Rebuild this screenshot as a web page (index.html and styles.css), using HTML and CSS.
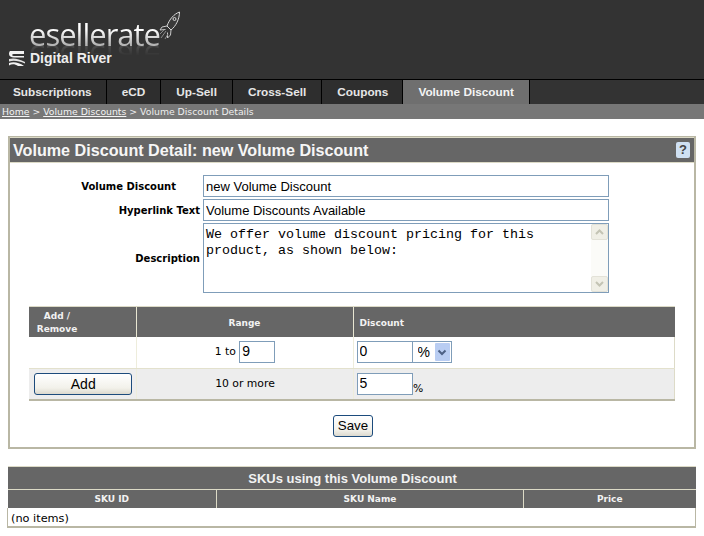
FILE: index.html
```html
<!DOCTYPE html>
<html lang="en">
<head>
    <meta charset="utf-8">
    <title>Volume Discount Detail</title>
    <link rel="stylesheet" href="styles.css">
</head>
<body>
    <div class="header">
        <div class="logo">
            <div class="logo-top">
                <span class="logo-word">esellerate</span>
                <svg class="rocket" width="22" height="34" viewBox="0 0 22 34">
                    <path d="M20.500 1 C15 3 10.500 8 8 15 L12 19 C17 15 20.500 8 20.500 1 Z" fill="#3a3a3a" stroke="#d8d8d8" stroke-width="1"/>
                    <path d="M8 15 L3 16 L1 19 L6.500 18.500 M12 19 L11.500 24 L8.500 27 L8.500 21.500" fill="none" stroke="#c8c8c8" stroke-width="1"/>
                    <path d="M7 20 L2 27 M5 19 L1 23 M9 23 L6 28" fill="none" stroke="#8a8a8a" stroke-width="1"/>
                    <circle cx="15.500" cy="8" r="1.500" fill="none" stroke="#d8d8d8"/>
                </svg>
            </div>
            <div class="logo-bottom">
                <svg class="river" width="16" height="15" viewBox="0 0 16 15">
                    <path d="M1 0 H15 V3 H6 C4 3 3 3.500 3 4 C3 4.500 4 5 6 5 H15 V6.500 H5 C2 6.500 0 5 0 3 C0 1.500 0.500 0.500 1 0 Z" fill="#f2f2f2"/>
                    <path d="M0 8 C5 6.500 10 8 16 11 V12.500 C10 10 5 9 0 10.500 Z" fill="#e2e2e2"/>
                    <path d="M0 12 C5 10.500 10 11.500 15 15 H9 C6 13 3 12.500 0 14.500 Z" fill="#f2f2f2"/>
                </svg>
                <span class="river-word">Digital River</span>
            </div>
        </div>
    </div>

    <ul class="tabs">
        <li class="tab tab-first">Subscriptions</li>
        <li class="tab">eCD</li>
        <li class="tab">Up-Sell</li>
        <li class="tab">Cross-Sell</li>
        <li class="tab tab-coupons">Coupons</li>
        <li class="tab tab-active">Volume Discount</li>
    </ul>

    <div class="crumbs">
        <a href="#">Home</a> &gt; <a href="#">Volume Discounts</a> &gt; Volume Discount Details
    </div>

    <div class="panel">
        <div class="panel-title">
            <h1>Volume Discount Detail: new Volume Discount</h1>
            <span class="help">?</span>
        </div>

        <div class="fields">
            <label class="field-label label-first">Volume Discount</label>
            <input class="field-input" type="text" value="new Volume Discount">
            <label class="field-label">Hyperlink Text</label>
            <input class="field-input" type="text" value="Volume Discounts Available">
            <label class="field-label">Description</label>
            <div class="desc">
                <textarea spellcheck="false">We offer volume discount pricing for this product, as shown below:</textarea>
                <div class="scrollbar">
                    <span class="scroll-btn">
                        <svg width="9" height="6" viewBox="0 0 9 6"><path d="M1 5 L4.500 1.500 L8 5" fill="none" stroke="#c4c4b4" stroke-width="2"/></svg>
                    </span>
                    <span class="scroll-btn">
                        <svg width="9" height="6" viewBox="0 0 9 6"><path d="M1 1 L4.500 4.500 L8 1" fill="none" stroke="#c4c4b4" stroke-width="2"/></svg>
                    </span>
                </div>
            </div>
        </div>

        <table class="ranges">
            <tr class="ranges-head">
                <th class="col-add"><span class="add-head">Add /<br>Remove</span></th>
                <th class="col-range">Range</th>
                <th class="col-discount">Discount</th>
            </tr>
            <tr>
                <td></td>
                <td class="cell-range">1 to <input class="small-input" type="text" value="9"></td>
                <td class="cell-discount">
                    <input class="small-input percent-input" type="text" value="0"><span class="select-box"><select><option>%</option></select><span class="select-arrow"><svg width="10" height="7" viewBox="0 0 10 7"><path d="M1.500 1.500 L5 5 L8.500 1.500" fill="none" stroke="#4d6185" stroke-width="2"/></svg></span></span>
                </td>
            </tr>
            <tr class="row-alt">
                <td class="cell-add"><button class="btn btn-add" type="button">Add</button></td>
                <td class="cell-range">10 or more</td>
                <td class="cell-discount"><input class="small-input percent-input" type="text" value="5"> <span class="percent">%</span></td>
            </tr>
        </table>

        <div class="save-row">
            <button class="btn btn-save" type="button">Save</button>
        </div>
    </div>

    <table class="skus">
        <colgroup>
            <col class="sku-id">
            <col class="sku-name">
            <col>
        </colgroup>
        <tr class="skus-title">
            <th colspan="3">SKUs using this Volume Discount</th>
        </tr>
        <tr class="skus-head">
            <th>SKU ID</th>
            <th>SKU Name</th>
            <th>Price</th>
        </tr>
        <tr>
            <td class="no-items" colspan="3">(no items)</td>
        </tr>
    </table>
</body>
</html>
```

FILE: styles.css
```css
body {
    margin: 0;
    background-color: white;
    color: black;
    font-family: "DejaVu Sans", sans-serif;
    font-size: 10px;
}

/* header */
.header {
    height: 79px;
    background-color: #333;
    box-sizing: border-box;
    padding: 11px 0 0 9px;
}

.logo-top {
    display: flex;
    align-items: flex-start;
    height: 37px;
    padding-left: 20px;
}

.logo-word {
    font-family: "Open Sans", sans-serif;
    font-size: 31px;
    line-height: 30px;
    letter-spacing: -1px;
    margin-top: 8px;
    color: transparent;
    background: linear-gradient(#ffffff 35%, #b4b4b4 85%);
    -webkit-background-clip: text;
    background-clip: text;
    -webkit-box-reflect: below -7px linear-gradient(transparent 55%, rgba(255, 255, 255, 0.25));
}

.rocket {
    margin-left: -1px;
}

.logo-bottom {
    display: flex;
    align-items: center;
    gap: 5px;
    margin-top: 2px;
}

.river-word {
    position: relative;
    font-family: "Liberation Sans", sans-serif;
    font-size: 14px;
    font-weight: bold;
    color: #eee;
}

/* tabs */
.tabs {
    display: flex;
    height: 25px;
    margin: 0;
    padding: 0;
    list-style: none;
    background-color: #333;
    border-top: 1px solid black;
    box-sizing: border-box;
    font-family: "Liberation Sans", sans-serif;
    font-size: 11.800px;
    font-weight: bold;
    color: #e6e6e6;
}

.tab {
    padding: 0 15px;
    line-height: 24px;
    background-color: #2e2e2e;
    border-right: 1px solid black;
}

.tab-first {
    padding: 0 14px 0 13px;
}

.tab-coupons {
    padding: 0 14px 0 15px;
}

.tab-active {
    background-color: #6f6f6f;
    color: #f4f4f4;
}

.crumbs {
    height: 15px;
    background-color: #777;
    color: #eee;
    padding-left: 2px;
    font-size: 9.300px;
    line-height: 15px;
}

.crumbs a {
    color: #f4f4f4;
}

/* main panel */
.panel {
    margin: 17px 8px 0 8px;
    border: 2px solid #b9b7a4;
    border-top-width: 1px;
    height: 313px;
    box-sizing: border-box;
}

.panel-title {
    display: flex;
    align-items: center;
    justify-content: space-between;
    height: 24px;
    background-color: #666;
    border-top: 1px solid #dcdac6;
    border-bottom: 1px solid #dcdac6;
    padding: 0 4px 0 3px;
}

.panel-title h1 {
    margin: 0;
    font-family: "Liberation Sans", sans-serif;
    font-size: 16.150px;
    font-weight: bold;
    color: #f6f6f6;
}

.help {
    width: 14px;
    height: 16px;
    background-color: #cfe0f2;
    border-radius: 2px;
    color: #444;
    text-align: center;
    font-family: "Liberation Sans", sans-serif;
    font-size: 13px;
    font-weight: bold;
    line-height: 16px;
}

.fields {
    display: grid;
    grid-template-columns: 190px 406px;
    grid-template-rows: 22px 22px 70px;
    row-gap: 2px;
    column-gap: 3px;
    padding-top: 12px;
    align-items: center;
}

.field-label {
    text-align: right;
    font-size: 10px;
    font-weight: bold;
}

.label-first {
    padding-right: 24px;
}

.field-input {
    box-sizing: border-box;
    width: 100%;
    height: 22px;
    border: 1px solid #7f9db9;
    padding: 1px 2px;
    font-family: "Liberation Sans", sans-serif;
    font-size: 13px;
    color: black;
}

.desc {
    display: flex;
    height: 70px;
    box-sizing: border-box;
    border: 1px solid #7f9db9;
}

.desc textarea {
    flex: 1;
    border: none;
    outline: none;
    resize: none;
    padding: 3px 2px 0 2px;
    overflow: hidden;
    font-family: "Liberation Mono", monospace;
    font-size: 13.330px;
    line-height: 16px;
    color: black;
}

.scrollbar {
    display: flex;
    flex-direction: column;
    justify-content: space-between;
    width: 17px;
    background-color: #fbfbf8;
}

.scroll-btn {
    display: flex;
    align-items: center;
    justify-content: center;
    height: 16px;
    background-color: #f0efe6;
    border: 1px solid #e3e2d8;
    border-radius: 2px;
    box-sizing: border-box;
}

/* range table */
.ranges {
    width: 646px;
    margin: 13px 0 0 19px;
    border-collapse: collapse;
    border-bottom: 2px solid #b9b7a4;
    table-layout: fixed;
}

.ranges-head th {
    height: 30px;
    padding: 2px 0 0 0;
    box-sizing: border-box;
    background-color: #666;
    color: #f2f2f2;
    font-size: 9px;
    font-weight: bold;
    border-left: 1px solid #e8e6d2;
    border-top: 1px solid #dcdac6;
}

.ranges-head th:first-child {
    border-left: none;
}

.col-add {
    width: 107px;
    text-align: left;
}

.add-head {
    display: block;
    width: 42px;
    margin-left: 7px;
    text-align: center;
    line-height: 12.500px;
}

.col-range {
    width: 217px;
}

.ranges-head .col-discount {
    padding-left: 6px;
    text-align: left;
}

.ranges td {
    height: 31px;
    padding: 0;
    border-left: 1px solid #eeeddc;
    border-bottom: 1px solid #e3e1cd;
    font-size: 10.800px;
}

.ranges td:first-child {
    border-left: none;
}

.ranges td:last-child {
    border-right: 1px solid #dddbc8;
}

.ranges .row-alt td {
    height: 30px;
    background-color: #ededed;
    border-bottom: none;
}

.ranges .cell-add {
    padding-left: 2px;
    text-align: center;
}

.ranges .cell-range {
    padding-left: 1px;
    text-align: center;
}

.ranges .cell-discount {
    padding-left: 3px;
    white-space: nowrap;
}

.small-input {
    box-sizing: border-box;
    width: 36px;
    height: 22px;
    border: 1px solid #7f9db9;
    padding: 0 2px 2px 2px;
    font-family: "Liberation Sans", sans-serif;
    font-size: 14px;
    vertical-align: middle;
    color: black;
}

.percent-input {
    width: 56px;
}

.percent {
    margin-left: -3px;
    vertical-align: -5px;
}

.select-box {
    position: relative;
    display: inline-block;
    vertical-align: middle;
    width: 39px;
    height: 22px;
}

.select-box select {
    appearance: none;
    box-sizing: border-box;
    width: 100%;
    height: 22px;
    border: 1px solid #7f9db9;
    border-left: none;
    border-radius: 0;
    background-color: white;
    padding: 0 0 0 5px;
    font-family: "Liberation Sans", sans-serif;
    font-size: 14px;
    color: black;
}

.select-arrow {
    position: absolute;
    top: 2px;
    right: 2px;
    display: flex;
    align-items: center;
    justify-content: center;
    width: 15px;
    height: 18px;
    background-color: #b9cdf2;
    border-radius: 1px;
}

.btn {
    height: 22px;
    padding: 0;
    border: 1px solid #1c4b7c;
    border-radius: 3px;
    background: linear-gradient(#ffffff, #f2f1ea 70%, #dcd9ce);
    font-family: "Liberation Sans", sans-serif;
    font-size: 14px;
    color: black;
}

.btn-add {
    width: 98px;
}

.btn-save {
    width: 40px;
    font-size: 13.300px;
}

.save-row {
    margin-top: 14px;
    padding-left: 2px;
    text-align: center;
}

/* sku table */
.skus {
    width: 689px;
    margin: 17px 0 0 7px;
    border-collapse: collapse;
    table-layout: fixed;
    border-bottom: 2px solid #b9b7a4;
}

.sku-id {
    width: 209px;
}

.sku-name {
    width: 307px;
}

.skus-title th {
    height: 22px;
    padding: 0 0 0 2px;
    background-color: #666;
    border-top: 1px solid #dcdac6;
    border-bottom: 1px solid #dcdac6;
    color: #f2f2f2;
    font-family: "Liberation Sans", sans-serif;
    font-size: 13px;
    font-weight: bold;
}

.skus-head th {
    height: 18px;
    padding: 1px 0 0 0;
    box-sizing: border-box;
    background-color: #666;
    border-left: 1px solid #dcdac6;
    color: #f2f2f2;
    font-size: 9px;
    font-weight: bold;
}

.skus-head th:first-child {
    border-left: none;
}

.no-items {
    height: 19px;
    padding: 3px 0 0 3px;
    box-sizing: border-box;
    border-right: 1px solid #b9b7a4;
    border-left: 1px solid #b9b7a4;
    font-size: 11.300px;
}
```
